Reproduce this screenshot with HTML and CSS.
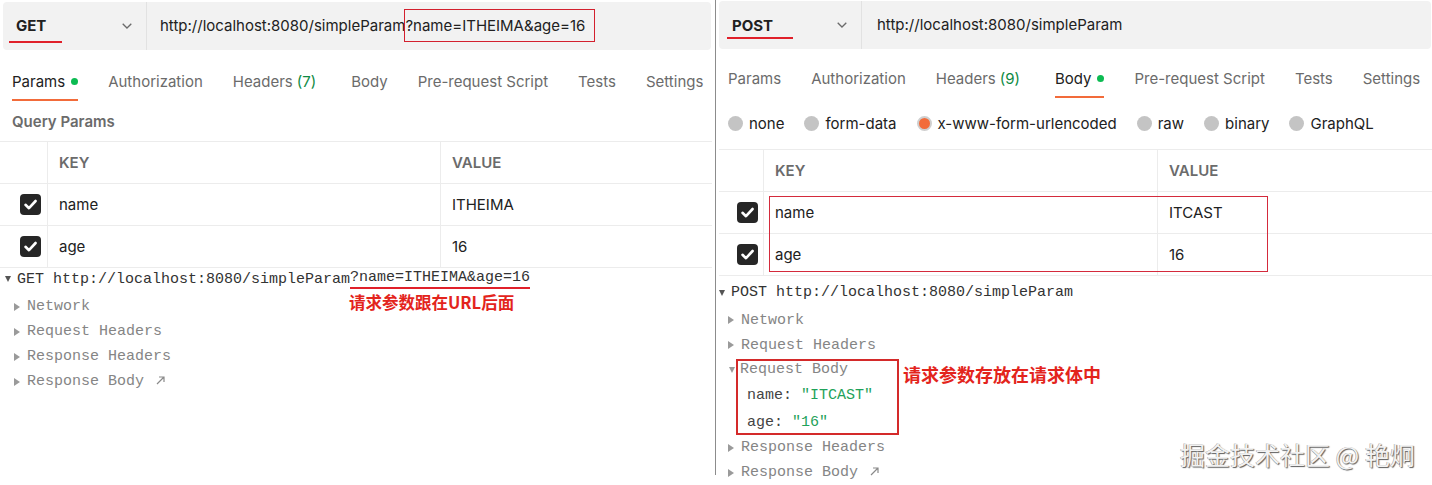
FILE: index.html
```html
<!DOCTYPE html>
<html lang="en">
<head>
    <meta charset="UTF-8">
    <meta name="viewport" content="width=device-width, initial-scale=1.0">
    <title>simpleParam requests</title>
    <link rel="stylesheet" href="styles.css">
</head>
<body>
<div class="page">

    <!-- GET: params go in the query string -->
    <section class="panel panel-get">
        <div class="url-bar">
            <div class="method">
                <span class="method-name">GET</span>
                <svg class="chevron" width="10" height="6" viewBox="0 0 10 6"><path d="M0.7 0.7 L5 5 L9.3 0.7" fill="none" stroke="#6b6b6b" stroke-width="1.3"/></svg>
            </div>
            <div class="url">http://localhost:8080/simpleParam<span class="mark-box">?name=ITHEIMA&amp;age=16</span></div>
        </div>

        <nav class="tabs">
            <span class="tab active">Params<i class="dot"></i></span>
            <span class="tab">Authorization</span>
            <span class="tab tab-headers">Headers <em>(7)</em></span>
            <span class="tab">Body</span>
            <span class="tab">Pre-request Script</span>
            <span class="tab">Tests</span>
            <span class="tab">Settings</span>
        </nav>

        <div class="section-title">Query Params</div>

        <div class="kv">
            <div class="kv-row kv-head">
                <div class="cell cell-check"></div>
                <div class="cell">KEY</div>
                <div class="cell">VALUE</div>
            </div>
            <div class="kv-row">
                <div class="cell cell-check"><span class="check"><svg width="21" height="21" viewBox="0 0 21 21"><path d="M5.5 10.8 L9 14.2 L15.6 7" fill="none" stroke="#fff" stroke-width="2.6" stroke-linecap="round" stroke-linejoin="round"/></svg></span></div>
                <div class="cell">name</div>
                <div class="cell">ITHEIMA</div>
            </div>
            <div class="kv-row">
                <div class="cell cell-check"><span class="check"><svg width="21" height="21" viewBox="0 0 21 21"><path d="M5.5 10.8 L9 14.2 L15.6 7" fill="none" stroke="#fff" stroke-width="2.6" stroke-linecap="round" stroke-linejoin="round"/></svg></span></div>
                <div class="cell">age</div>
                <div class="cell">16</div>
            </div>
        </div>

        <div class="console">
            <div class="log-head"><i class="caret down dark"></i>GET http://localhost:8080/simpleParam<span class="mark-line">?name=ITHEIMA&amp;age=16</span></div>
            <div class="log-list">
                <div class="log-item"><i class="caret"></i>Network</div>
                <div class="log-item"><i class="caret"></i>Request Headers</div>
                <div class="log-item"><i class="caret"></i>Response Headers</div>
                <div class="log-item"><i class="caret"></i>Response Body<svg class="ext" width="9" height="9" viewBox="0 0 9 9"><path d="M1 8 L8 1 M3 1 H8 V6" fill="none" stroke="#8a8a8a" stroke-width="1.2"/></svg></div>
            </div>
            <div class="note note-url">请求参数跟在URL后面</div>
        </div>
    </section>

    <div class="split"></div>

    <!-- POST: params go in the form body -->
    <section class="panel panel-post">
        <div class="url-bar">
            <div class="method">
                <span class="method-name">POST</span>
                <svg class="chevron" width="10" height="6" viewBox="0 0 10 6"><path d="M0.7 0.7 L5 5 L9.3 0.7" fill="none" stroke="#6b6b6b" stroke-width="1.3"/></svg>
            </div>
            <div class="url">http://localhost:8080/simpleParam</div>
        </div>

        <nav class="tabs">
            <span class="tab">Params</span>
            <span class="tab">Authorization</span>
            <span class="tab tab-headers">Headers <em>(9)</em></span>
            <span class="tab active">Body<i class="dot"></i></span>
            <span class="tab">Pre-request Script</span>
            <span class="tab">Tests</span>
            <span class="tab">Settings</span>
        </nav>

        <div class="body-types">
            <label class="radio"><i></i>none</label>
            <label class="radio"><i></i>form-data</label>
            <label class="radio selected"><i></i>x-www-form-urlencoded</label>
            <label class="radio"><i></i>raw</label>
            <label class="radio"><i></i>binary</label>
            <label class="radio"><i></i>GraphQL</label>
        </div>

        <div class="kv">
            <div class="kv-row kv-head">
                <div class="cell cell-check"></div>
                <div class="cell">KEY</div>
                <div class="cell">VALUE</div>
            </div>
            <div class="kv-row">
                <div class="cell cell-check"><span class="check"><svg width="21" height="21" viewBox="0 0 21 21"><path d="M5.5 10.8 L9 14.2 L15.6 7" fill="none" stroke="#fff" stroke-width="2.6" stroke-linecap="round" stroke-linejoin="round"/></svg></span></div>
                <div class="cell">name</div>
                <div class="cell">ITCAST</div>
            </div>
            <div class="kv-row">
                <div class="cell cell-check"><span class="check"><svg width="21" height="21" viewBox="0 0 21 21"><path d="M5.5 10.8 L9 14.2 L15.6 7" fill="none" stroke="#fff" stroke-width="2.6" stroke-linecap="round" stroke-linejoin="round"/></svg></span></div>
                <div class="cell">age</div>
                <div class="cell">16</div>
            </div>
            <div class="mark-rows"></div>
        </div>

        <div class="console">
            <div class="log-head"><i class="caret down dark"></i>POST http://localhost:8080/simpleParam</div>
            <div class="log-list">
                <div class="log-item"><i class="caret"></i>Network</div>
                <div class="log-item"><i class="caret"></i>Request Headers</div>
                <div class="log-group">
                    <i class="caret down"></i>
                    <div class="body-box">
                        <div class="body-title">Request Body</div>
                        <div class="body-field">name: <span class="str">"ITCAST"</span></div>
                        <div class="body-field">age: <span class="str">"16"</span></div>
                    </div>
                    <div class="note note-body">请求参数存放在请求体中</div>
                </div>
                <div class="log-item"><i class="caret"></i>Response Headers</div>
                <div class="log-item"><i class="caret"></i>Response Body<svg class="ext" width="9" height="9" viewBox="0 0 9 9"><path d="M1 8 L8 1 M3 1 H8 V6" fill="none" stroke="#8a8a8a" stroke-width="1.2"/></svg></div>
            </div>
        </div>
    </section>

    <div class="watermark">掘金技术社区 @ 艳炯</div>
</div>
</body>
</html>
```

FILE: styles.css
```css
body {
    margin: 0;
    padding: 0;
    background-color: #fff;
    font-family: Inter, "Noto Sans", sans-serif;
    font-size: 15px;
    color: #212121;
}

.page {
    position: relative;
    display: flex;
    width: 1432px;
    height: 485px;
    overflow: hidden;
}

.panel {
    display: flex;
    flex-direction: column;
}

.panel-get {
    width: 712px;
}

.panel-post {
    width: 713px;
}

.split {
    width: 1px;
    background-color: #8c8c8c;
    margin: 0 3px 10px 3px;
}

/* URL bar */
.url-bar {
    display: flex;
    align-items: center;
    height: 48px;
    background-color: #f2f2f2;
    border-radius: 4px;
}

.panel-get .url-bar {
    margin: 2px 1px 0 3px;
}

.panel-post .url-bar {
    margin: 1px 1px 0 0;
    height: 49px;
}

.method {
    display: flex;
    align-items: flex-start;
    height: 100%;
    width: 144px;
    box-sizing: border-box;
    border-right: 1px solid #e2e2e2;
}

.panel-get .method {
    padding-left: 6px;
}

.panel-post .method {
    width: 143px;
    padding-left: 8px;
}

.method-name {
    font-size: 15px;
    font-weight: 700;
    line-height: 20px;
    color: #212121;
}

.panel-get .method-name {
    padding: 6px 16px 5px 7px;
    margin-top: 8px;
    border-bottom: 2.5px solid #e0202a;
}

.panel-post .method-name {
    padding: 4px 20px 1.5px 5px;
    margin-top: 10.5px;
    border-bottom: 2px solid #e0202a;
}

.chevron {
    align-self: center;
    margin-left: auto;
    margin-right: 14px;
}

.url {
    padding-left: 13px;
    line-height: 20px;
    color: #212121;
    white-space: nowrap;
}

.panel-post .url {
    padding-left: 15px;
}

.mark-box {
    padding: 6px 9px 6px 0;
    outline: 1.5px solid #d3202e;
}

/* Tabs */
.tabs {
    display: flex;
    gap: 30px;
    color: #6b6b6b;
}

.panel-get .tabs {
    padding-left: 12px;
    height: 51px;
}

.panel-post .tabs {
    padding-left: 9px;
    height: 49px;
}

.tab {
    display: flex;
    align-items: center;
    line-height: 20px;
    white-space: nowrap;
    padding-bottom: 7px;
    border-bottom: 2px solid transparent;
}

.panel-get .tab {
    padding-top: 21px;
}

.panel-post .tab {
    padding-top: 20px;
}

.tab.active {
    color: #212121;
    border-bottom-color: #f26b3a;
}

.tab-headers {
    margin-right: 5px;
}

.tab em {
    font-style: normal;
    color: #0e8a43;
    margin-left: 4px;
}

.dot {
    display: inline-block;
    width: 7px;
    height: 7px;
    border-radius: 50%;
    background-color: #0cbb52;
    margin-left: 6px;
}

.section-title {
    font-weight: 600;
    color: #6b6b6b;
    line-height: 20px;
    padding: 11px 0 9px 12px;
}

/* Body type radios */
.body-types {
    display: flex;
    align-items: center;
    gap: 20px;
    height: 52px;
    padding-left: 9px;
    color: #212121;
}

.radio {
    display: flex;
    align-items: center;
    gap: 6px;
}

.radio i {
    width: 15px;
    height: 15px;
    border-radius: 50%;
    background-color: #c4c4c4;
    box-sizing: border-box;
}

.radio.selected i {
    background-color: #f26b3a;
    border: 2px solid #cfcfcf;
}

/* Key / value table */
.kv {
    position: relative;
    border-top: 1px solid #ececec;
}

.kv-row {
    display: grid;
    height: 41px;
    border-bottom: 1px solid #ececec;
}

.panel-get .kv-row {
    grid-template-columns: 47px 393px 1fr;
}

.panel-post .kv-row {
    grid-template-columns: 44px 394px 1fr;
}

.cell {
    display: flex;
    align-items: center;
    padding-left: 11px;
    border-left: 1px solid #ececec;
}

.cell-check {
    border-left: none;
}

.panel-get .cell-check {
    padding-left: 20px;
}

.panel-post .cell-check {
    padding-left: 18px;
}

.kv-head .cell {
    font-weight: 600;
    color: #6b6b6b;
}

.check {
    display: block;
    width: 21px;
    height: 21px;
    border-radius: 4px;
    background-color: #262626;
}

.check svg {
    display: block;
}

.mark-rows {
    position: absolute;
    left: 50px;
    top: 46px;
    width: 499px;
    height: 76px;
    box-sizing: border-box;
    border: 1.5px solid #d42a3c;
}

/* Console log */
.console {
    position: relative;
    flex: 1;
    font-family: "Liberation Mono", "DejaVu Sans Mono", monospace;
    font-size: 15px;
    color: #858585;
}

.panel-get .console {
    padding-left: 5px;
}

.panel-post .console {
    padding-top: 6px;
}

.log-head {
    display: flex;
    align-items: center;
    height: 22px;
    color: #333;
    white-space: nowrap;
}

.log-list {
    margin-top: 4px;
}

.panel-get .log-list {
    margin-left: -5px;
}

.log-item {
    display: flex;
    align-items: center;
    height: 25px;
    padding-left: 14px;
    white-space: nowrap;
}

.panel-post .log-item {
    padding-left: 9px;
}

.ext {
    margin-left: 12px;
    margin-top: -2px;
}

.caret {
    display: inline-block;
    width: 0;
    height: 0;
    border-top: 4px solid transparent;
    border-bottom: 4px solid transparent;
    border-left: 6px solid #9a9a9a;
    margin-right: 7px;
}

.caret.down {
    border-left: 3.5px solid transparent;
    border-right: 3.5px solid transparent;
    border-top: 6px solid #9a9a9a;
    border-bottom: none;
    margin-right: 6px;
}

.caret.down.dark {
    border-top-color: #555;
}

.mark-line {
    padding-bottom: 1px;
    border-bottom: 2px solid #e0202a;
}

.log-group {
    display: flex;
    align-items: flex-start;
    padding-left: 10px;
    margin-top: 1.5px;
}

.log-group .caret.down {
    margin-top: 8px;
    margin-right: 1px;
}

.body-box {
    width: 163px;
    box-sizing: border-box;
    border: 2px solid #d42a2a;
    padding: 0 0 0 2px;
}

.body-title {
    height: 18px;
    line-height: 18px;
}

.body-field {
    height: 20px;
    line-height: 20px;
    padding-left: 7px;
    color: #444;
    margin-top: 7px;
}

.body-field:first-of-type {
    margin-top: 8px;
}

.str {
    color: #1fa25a;
}

.note {
    font-family: "Noto Sans CJK SC", sans-serif;
    font-weight: 700;
    color: #e3241c;
    white-space: nowrap;
}

.note-url {
    position: absolute;
    left: 349px;
    top: 22px;
    font-size: 16.5px;
    line-height: 24px;
}

.note-body {
    font-size: 18px;
    line-height: 24px;
    margin: 3px 0 0 4px;
}

.watermark {
    position: absolute;
    left: 1180px;
    top: 437px;
    font-family: "Noto Sans CJK SC", sans-serif;
    font-size: 25px;
    line-height: 34px;
    color: #f2f2f2;
    text-shadow: 1px 1px 1px #5c5c5c, -0.5px -0.5px 0 #9a9a9a;
    white-space: nowrap;
}
```
